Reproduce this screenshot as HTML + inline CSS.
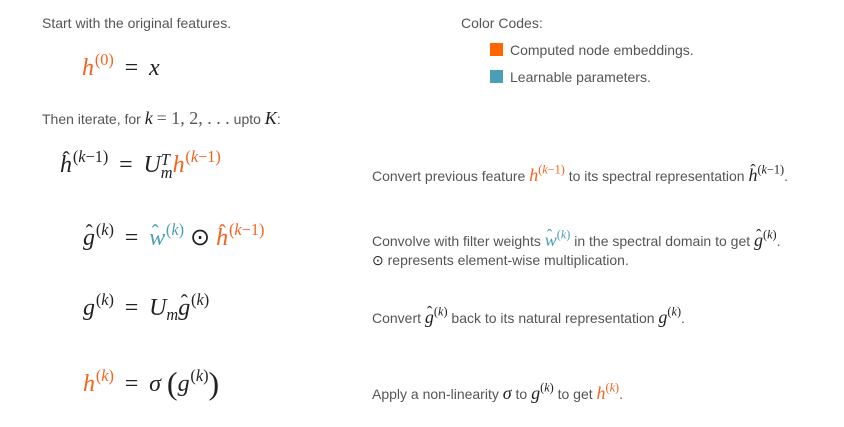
<!DOCTYPE html>
<html><head><meta charset="utf-8"><style>
body{margin:0;width:844px;height:427px;background:#fff;position:relative;overflow:hidden;font-family:"Liberation Sans",sans-serif;font-size:14px;color:#555;}
.a{position:absolute;white-space:nowrap;line-height:16px;}
.m{font-family:"Liberation Serif",serif;font-style:italic;color:#222;}
.r{font-family:"Liberation Serif",serif;font-style:normal;}
.o{color:#f5621e;}
.t{color:#4a9eb5;}
.d{font-size:24px;line-height:26px;color:#222;}
.d .eq{margin:0 0.2em;}
.d sup{margin-left:0.05em;}
.i{font-size:18px;}
sup{font-size:0.68em;vertical-align:0.6em;line-height:0;}
sub{font-size:0.68em;vertical-align:-0.3em;line-height:0;}
.hat{position:relative;display:inline-block;}
.hat:before{content:"\02C6";position:absolute;left:0.12em;top:-0.28em;font-style:normal;font-size:0.9em;}
.box{position:absolute;width:13px;height:13px;}
.ss{display:inline-block;vertical-align:-0.35em;line-height:0.75em;font-size:0.68em;}
</style></head><body>
<div class="a" style="left:42px;top:15px">Start with the original features.</div>
<div class="a m d" style="left:82px;top:55px"><span class="o">h<sup class="r">(0)</sup></span> <span class="r eq">=</span> x</div>
<div class="a" style="left:42px;top:110px">Then iterate, for <span class="m i">k</span> <span class="r i">= 1, 2, . . .</span> upto <span class="m i">K</span>:</div>

<div class="a" style="left:461px;top:15px">Color Codes:</div>
<div class="box" style="left:490px;top:43px;background:#ff6600"></div>
<div class="a" style="left:510px;top:42px">Computed node embeddings.</div>
<div class="box" style="left:490px;top:70px;background:#4a9eb5"></div>
<div class="a" style="left:510px;top:69px">Learnable parameters.</div>

<div class="a m d" style="left:60px;top:152px"><span class="hat">h</span><sup class="r">(<i>k</i>−1)</sup> <span class="r eq">=</span> U<span class="ss">T<br>m</span><span class="o">h<sup class="r">(<i>k</i>−1)</sup></span></div>
<div class="a m d" style="left:83px;top:225px"><span class="hat">g</span><sup class="r">(<i>k</i>)</sup> <span class="r eq">=</span> <span class="t"><span class="hat">w</span><sup class="r">(<i>k</i>)</sup></span> <span class="r">⊙</span> <span class="o"><span class="hat">h</span><sup class="r">(<i>k</i>−1)</sup></span></div>
<div class="a m d" style="left:83px;top:295px">g<sup class="r">(<i>k</i>)</sup> <span class="r eq">=</span> U<sub>m</sub><span class="hat">g</span><sup class="r">(<i>k</i>)</sup></div>
<div class="a m d" style="left:83px;top:370px"><span class="o">h<sup class="r">(<i>k</i>)</sup></span> <span class="r eq">=</span> σ <span class="r" style="font-size:32px;vertical-align:-3px">(</span>g<sup class="r">(<i>k</i>)</sup><span class="r" style="font-size:32px;vertical-align:-3px">)</span></div>

<div class="a" style="left:372px;top:167px">Convert previous feature <span class="m i o">h<sup class="r">(<i>k</i>−1)</sup></span> to its spectral representation <span class="m i"><span class="hat">h</span><sup class="r">(<i>k</i>−1)</sup></span>.</div>
<div class="a" style="left:372px;top:232px">Convolve with filter weights <span class="m i t"><span class="hat">w</span><sup class="r">(<i>k</i>)</sup></span> in the spectral domain to get <span class="m i"><span class="hat">g</span><sup class="r">(<i>k</i>)</sup></span>.</div>
<div class="a" style="left:372px;top:252px"><span class="r" style="color:#222">⊙</span> represents element-wise multiplication.</div>
<div class="a" style="left:372px;top:309px">Convert <span class="m i"><span class="hat">g</span><sup class="r">(<i>k</i>)</sup></span> back to its natural representation <span class="m i">g<sup class="r">(<i>k</i>)</sup></span>.</div>
<div class="a" style="left:372px;top:385px">Apply a non-linearity <span class="m i">σ</span> to <span class="m i">g<sup class="r">(<i>k</i>)</sup></span> to get <span class="m i o">h<sup class="r">(<i>k</i>)</sup></span>.</div>
</body></html>
